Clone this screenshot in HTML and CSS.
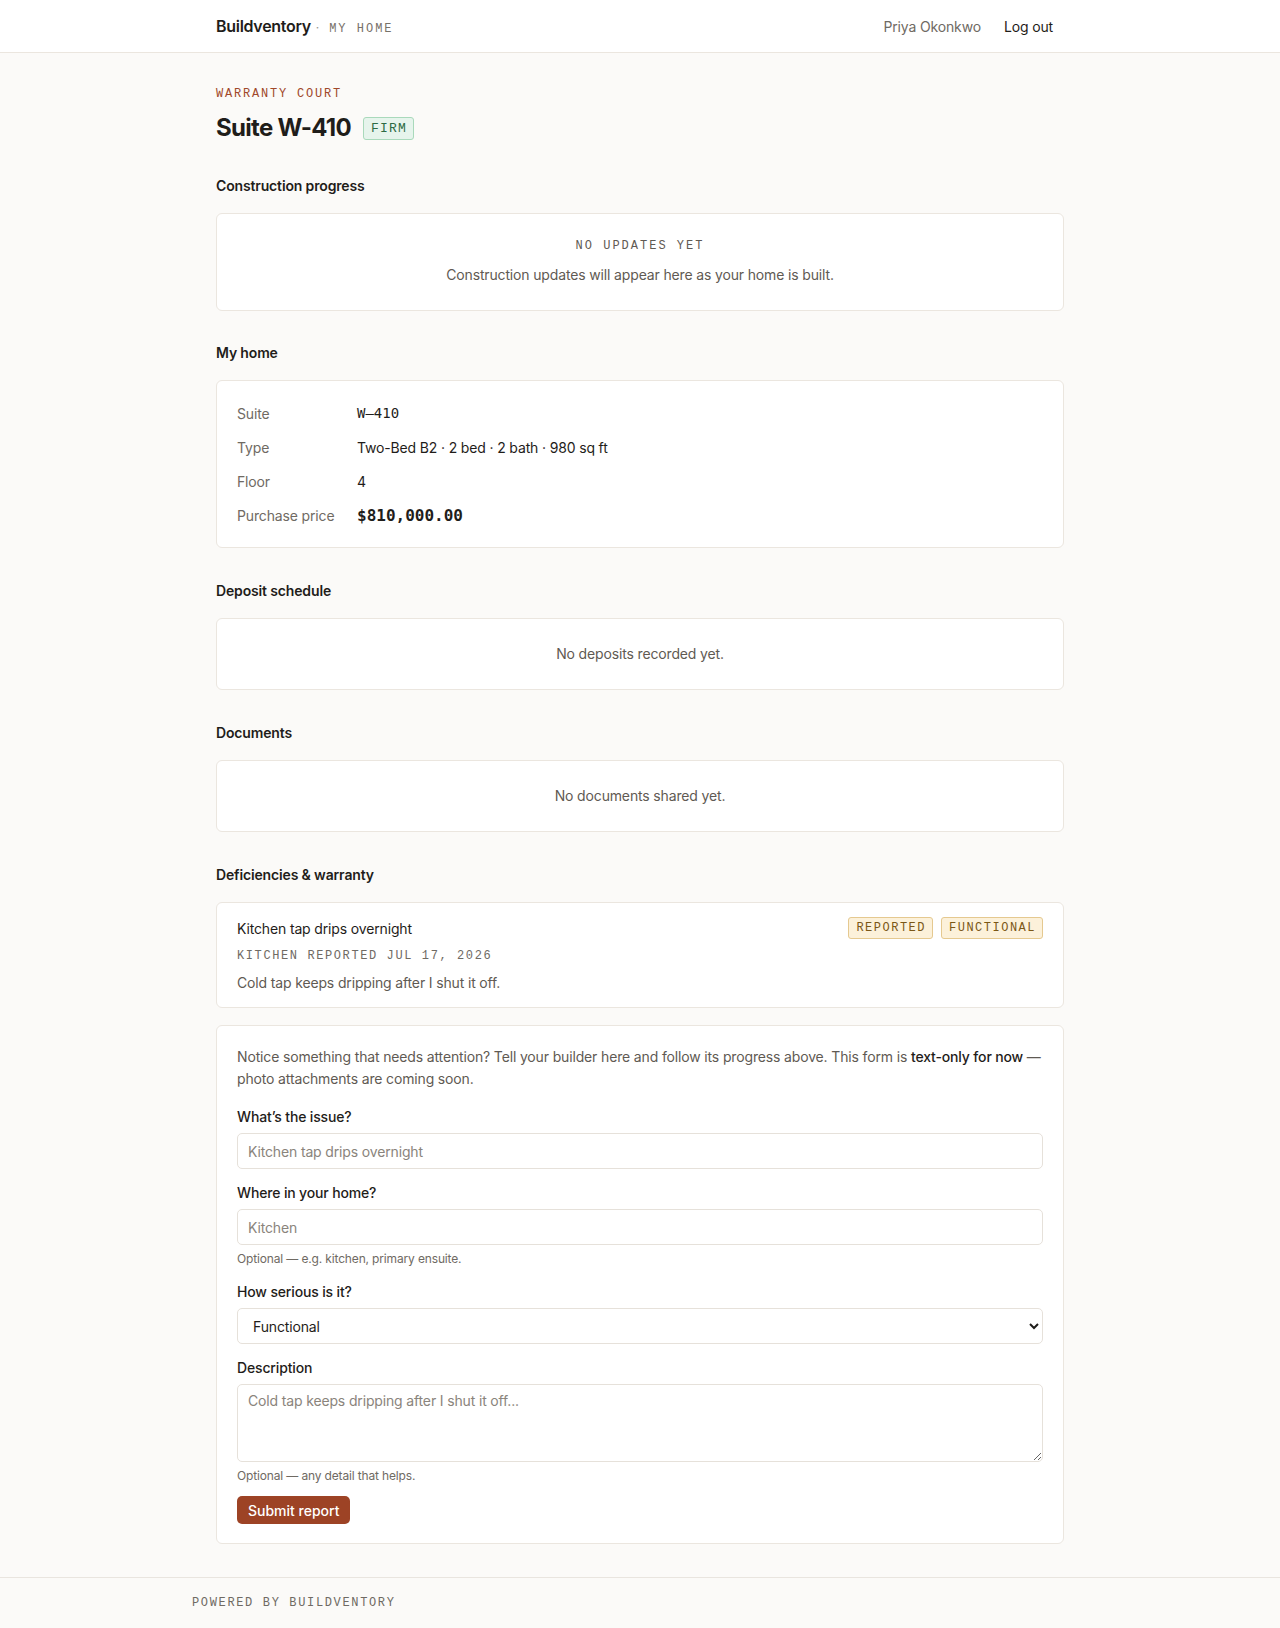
FILE: index.html
```html
<!DOCTYPE html>
<html lang="en">
<head>
    <meta charset="UTF-8">
    <title>Suite W-410 · Buildventory</title>
    <link rel="stylesheet" href="styles.css">
</head>
<body>
<header class="topbar">
    <div class="topbar-inner">
        <div class="brand">
            <span class="brand-name">Buildventory</span>
            <span class="brand-sep">·</span>
            <span class="brand-area">MY HOME</span>
        </div>
        <nav class="user-nav">
            <span class="user-name">Priya Okonkwo</span>
            <a href="#" class="logout">Log out</a>
        </nav>
    </div>
</header>

<main class="page">
    <div class="eyebrow">WARRANTY COURT</div>
    <div class="title-row">
        <h1>Suite W-410</h1>
        <span class="badge badge-green">FIRM</span>
    </div>

    <section class="section">
        <h2>Construction progress</h2>
        <div class="card card-empty">
            <div class="empty-title">NO UPDATES YET</div>
            <p class="empty-text">Construction updates will appear here as your home is built.</p>
        </div>
    </section>

    <section class="section">
        <h2>My home</h2>
        <div class="card">
            <dl class="facts">
                <dt>Suite</dt><dd class="mono">W–410</dd>
                <dt>Type</dt><dd>Two-Bed B2 · 2 bed · 2 bath · 980 sq ft</dd>
                <dt>Floor</dt><dd>4</dd>
                <dt>Purchase price</dt><dd class="mono price">$810,000.00</dd>
            </dl>
        </div>
    </section>

    <section class="section">
        <h2>Deposit schedule</h2>
        <div class="card card-note">No deposits recorded yet.</div>
    </section>

    <section class="section">
        <h2>Documents</h2>
        <div class="card card-note">No documents shared yet.</div>
    </section>

    <section class="section">
        <h2>Deficiencies &amp; warranty</h2>
        <div class="card issue">
            <div class="issue-head">
                <div class="issue-title">Kitchen tap drips overnight</div>
                <div class="issue-tags">
                    <span class="badge badge-amber">REPORTED</span>
                    <span class="badge badge-amber">FUNCTIONAL</span>
                </div>
            </div>
            <div class="issue-meta">KITCHEN REPORTED JUL 17, 2026</div>
            <p class="issue-desc">Cold tap keeps dripping after I shut it off.</p>
        </div>

        <form class="card report-form" onsubmit="return false">
            <p class="intro">Notice something that needs attention? Tell your builder here and follow its progress above. This form is <strong>text-only for now</strong> — photo attachments are coming soon.</p>

            <div class="field">
                <label for="f-title">What’s the issue?</label>
                <input id="f-title" type="text" placeholder="Kitchen tap drips overnight">
            </div>
            <div class="field">
                <label for="f-where">Where in your home?</label>
                <input id="f-where" type="text" placeholder="Kitchen">
                <div class="hint">Optional — e.g. kitchen, primary ensuite.</div>
            </div>
            <div class="field">
                <label for="f-sev">How serious is it?</label>
                <select id="f-sev">
                    <option>Cosmetic</option>
                    <option selected>Functional</option>
                    <option>Urgent</option>
                </select>
            </div>
            <div class="field field-last">
                <label for="f-desc">Description</label>
                <textarea id="f-desc" rows="3" placeholder="Cold tap keeps dripping after I shut it off..."></textarea>
                <div class="hint">Optional — any detail that helps.</div>
            </div>
            <button type="submit" class="btn">Submit report</button>
        </form>
    </section>
</main>

<footer class="footer">
    <div class="footer-inner">POWERED BY BUILDVENTORY</div>
</footer>
</body>
</html>
```

FILE: styles.css
```css
*{
    box-sizing: border-box;
}
body{
    margin: 0;
    background: #fbfaf8;
    color: #1f1d1a;
    font-family: Inter, "Noto Sans", sans-serif;
    font-size: 14px;
    line-height: 1.5;
    letter-spacing: -0.15px;
}
.mono{
    font-family: "DejaVu Sans Mono", "Liberation Mono", monospace;
    letter-spacing: 0;
}
.brand-area,
.eyebrow,
.badge,
.empty-title,
.issue-meta,
.footer-inner{
    font-family: "Liberation Mono", "DejaVu Sans Mono", monospace;
}

/* top bar */
.topbar{
    background: #fff;
    border-bottom: 1px solid #ebe6df;
}
.topbar-inner{
    max-width: 880px;
    margin: 0 auto;
    padding: 0 16px;
    height: 52px;
    display: flex;
    align-items: center;
    justify-content: space-between;
}
.brand{
    display: flex;
    align-items: baseline;
}
.brand-name{
    font-weight: 600;
    font-size: 16px;
    letter-spacing: -0.3px;
}
.brand-sep{
    color: #9a948c;
    font-size: 12px;
    margin: 0 10px 0 5px;
}
.brand-area{
    color: #77716a;
    font-size: 12px;
    letter-spacing: 2px;
}
.user-nav{
    display: flex;
    gap: 23px;
    margin-right: 11px;
}
.user-name{
    color: #6f6a63;
}
.logout{
    color: #1f1d1a;
    text-decoration: none;
}

/* page */
.page{
    max-width: 880px;
    margin: 0 auto;
    padding: 32px 16px 33px;
}
.eyebrow{
    color: #a0482a;
    font-size: 12px;
    letter-spacing: 1.8px;
    line-height: 18px;
}
.title-row{
    display: flex;
    align-items: center;
    gap: 12px;
    margin-top: 9px;
}
h1{
    margin: 0;
    font-size: 24px;
    font-weight: 700;
    letter-spacing: -0.7px;
    line-height: 32px;
}
.badge{
    display: inline-block;
    font-size: 12px;
    letter-spacing: 1.5px;
    line-height: 20px;
    padding: 0 6px 0 7px;
    border-radius: 3px;
    border: 1px solid;
}
.badge-green{
    background: #e6f4ec;
    border-color: #a9d9bb;
    color: #2d6b44;
    font-size: 13px;
    letter-spacing: 1.2px;
    line-height: 21px;
    padding: 0 6px 0 7px;
}
.badge-amber{
    background: #fcf1da;
    border-color: #e5c990;
    color: #7b5716;
}

.section{
    margin-top: 32px;
}
.section + .section{
    margin-top: 32px;
}
.section + .section + .section{
    margin-top: 33px;
}
h2{
    margin: 0 0 17px;
    font-size: 14px;
    font-weight: 600;
    line-height: 20px;
}
.card{
    background: #fff;
    border: 1px solid #ebe6df;
    border-radius: 6px;
    padding: 20px;
}
.card-empty{
    text-align: center;
    padding: 23px 20px 25px;
}
.empty-title{
    color: #5f5a53;
    font-size: 12px;
    letter-spacing: 2px;
    line-height: 18px;
}
.empty-text{
    margin: 9px 0 0;
    color: #5f5a53;
}
.card-note{
    text-align: center;
    color: #5f5a53;
    padding: 24px 20px 25px;
}

/* home facts */
.facts{
    display: grid;
    grid-template-columns: 120px 1fr;
    row-gap: 13px;
    margin: 0;
    padding: 2px 0 1px;
}
.facts dt{
    color: #6f6a63;
    line-height: 21px;
}
.facts dd{
    margin: 0;
    line-height: 21px;
}
.price{
    font-size: 16px;
    font-weight: 700;
}

/* deficiency item */
.issue{
    padding: 14px 20px 14px;
}
.issue-head{
    display: flex;
    justify-content: space-between;
    align-items: center;
}
.issue-tags{
    display: flex;
    gap: 8px;
}
.issue-meta{
    color: #6f6a63;
    font-size: 12px;
    letter-spacing: 1.6px;
    margin-top: 8px;
}
.issue-desc{
    margin: 7px 0 0;
    color: #5f5a53;
}

/* report form */
.report-form{
    margin-top: 17px;
    padding: 20px 20px 19px;
}
.intro{
    margin: 0 0 17px;
    color: #5f5a53;
    line-height: 22px;
}
.intro strong{
    color: #1f1d1a;
    font-weight: 500;
}
.field{
    margin-bottom: 14px;
}
.field-last{
    margin-bottom: 11px;
}
.field label{
    display: block;
    font-weight: 500;
    margin-bottom: 6px;
    line-height: 20px;
}
.field input,
.field select,
.field textarea{
    display: block;
    width: 100%;
    font-family: inherit;
    font-size: 14px;
    letter-spacing: -0.15px;
    color: #1f1d1a;
    background: #fff;
    border: 1px solid #e6e1da;
    border-radius: 5px;
    padding: 7px 10px;
    height: 36px;
}
.field select{
    padding-left: 11px;
}
.field textarea{
    height: 78px;
    resize: vertical;
}
.field ::placeholder{
    color: #8a847c;
}
.hint{
    font-size: 12px;
    color: #6f6a63;
    margin-top: 5px;
}
.btn{
    font-family: inherit;
    font-size: 14px;
    font-weight: 500;
    color: #fff;
    background: #9d4325;
    border: 0;
    border-radius: 5px;
    padding: 0 11px;
    height: 28px;
    cursor: pointer;
}

/* footer */
.footer{
    border-top: 1px solid #e9e5df;
}
.footer-inner{
    max-width: 896px;
    margin: 0 auto;
    padding: 16px 0 17px;
    color: #6f6a63;
    font-size: 12px;
    letter-spacing: 1.65px;
}
```
